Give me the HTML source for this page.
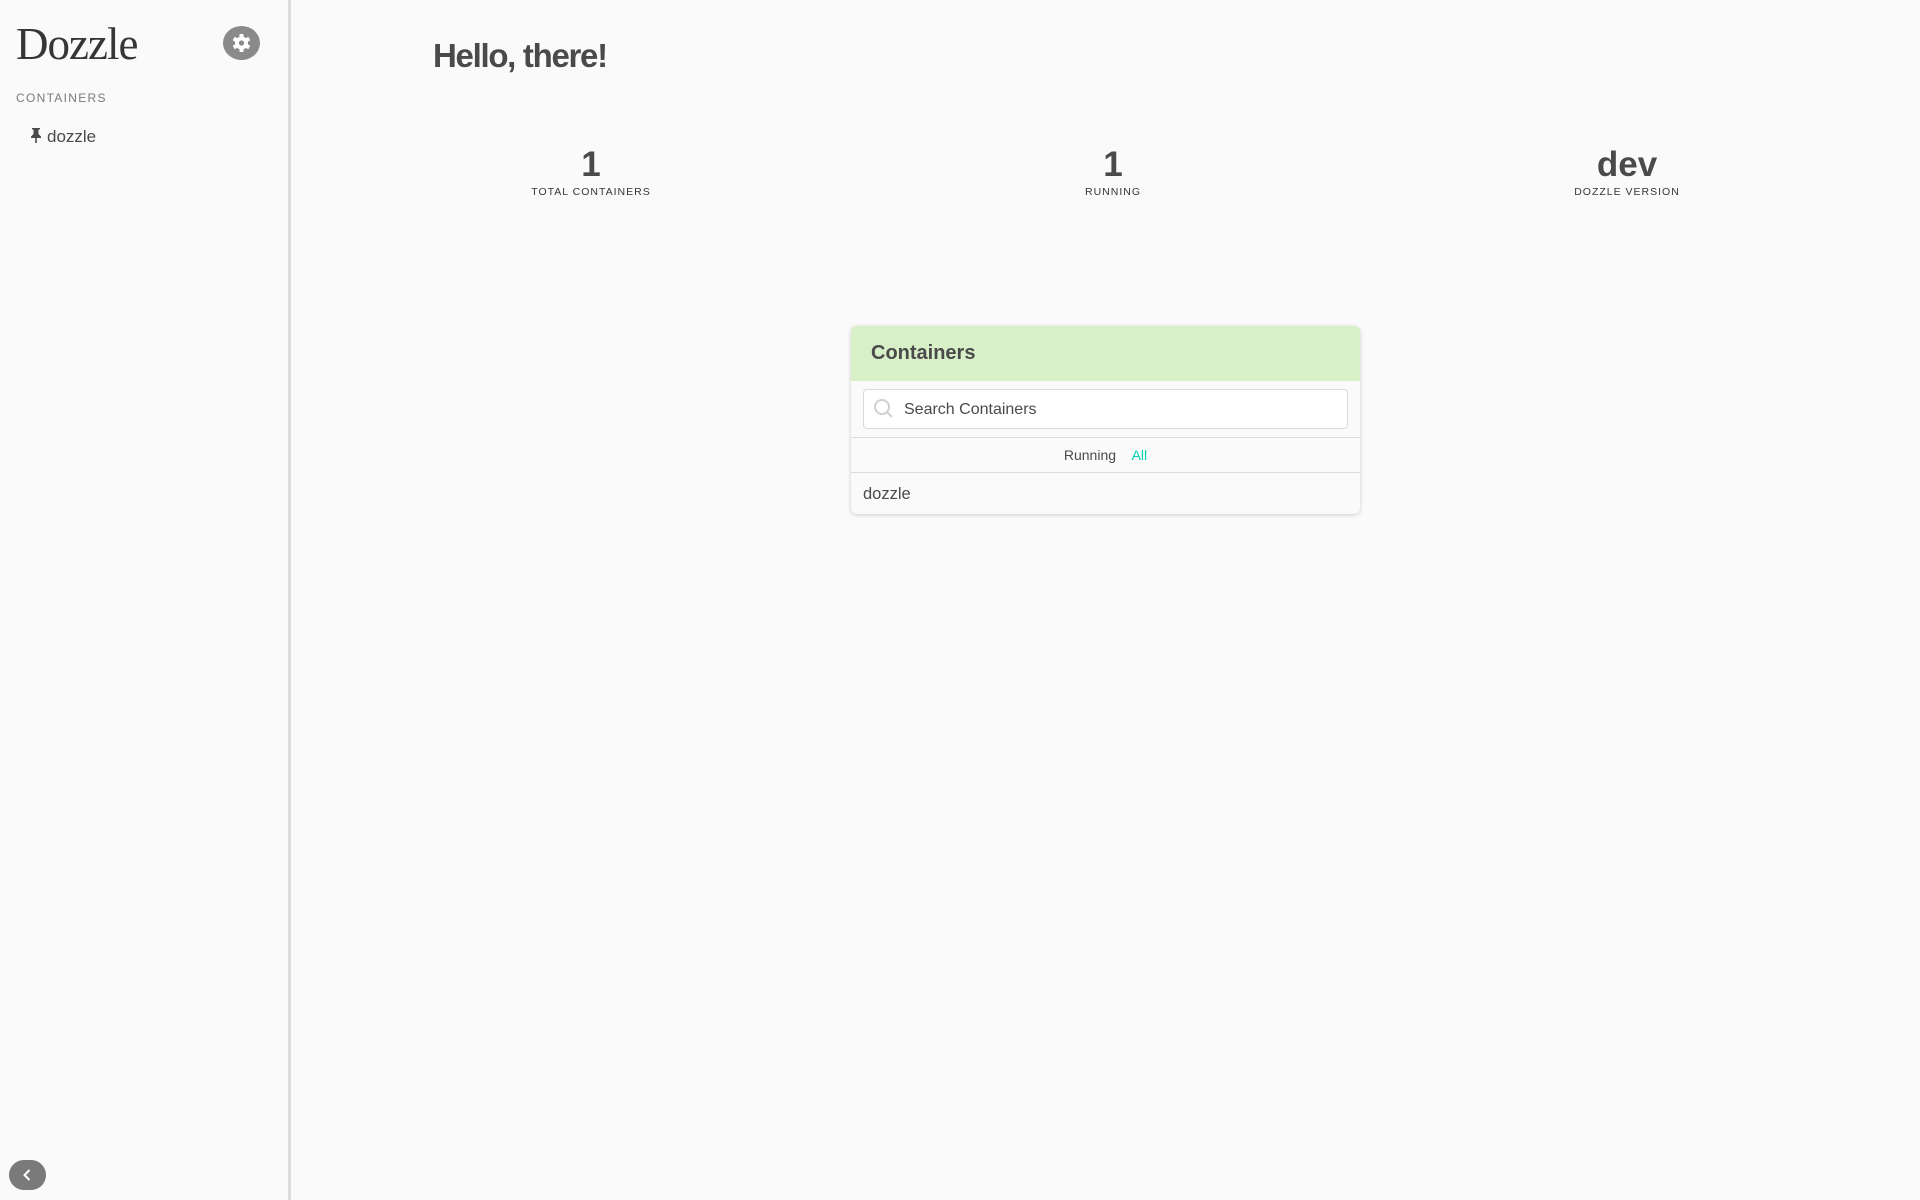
<!DOCTYPE html>
<html><head><meta charset="utf-8"><style>
*{box-sizing:border-box;margin:0;padding:0}
body{width:1920px;height:1200px;background:#fafafa;font-family:"Liberation Sans",sans-serif;color:#4a4a4a;position:relative;overflow:hidden}
.side{position:absolute;left:0;top:0;width:291px;height:1200px;border-right:3px solid #dcdcdc;background:#fafafa}
.logo{position:absolute;left:16px;top:18px;font-family:"Liberation Serif",serif;font-size:45px;color:#363636;letter-spacing:-1px}
.gear{position:absolute;left:223px;top:26px;width:37px;height:34px;border-radius:50%;background:#8a8a8a}
.lbl{position:absolute;left:16px;top:91px;font-size:12px;letter-spacing:1.3px;color:#7a7a7a}
.item{position:absolute;left:30px;top:127px;font-size:17px;color:#4a4a4a}
.coll{position:absolute;left:9px;top:1160px;width:37px;height:30px;border-radius:15px;background:#7a7a7a}
h1{position:absolute;left:433px;top:37px;font-size:33px;font-weight:bold;color:#4a4a4a;letter-spacing:-1.3px}
.stat{position:absolute;top:145px;width:300px;text-align:center}
.stat b{display:block;font-size:35px;line-height:40px;color:#4a4a4a}
.stat span{display:block;font-size:10.5px;letter-spacing:1px;color:#363636;margin-top:1px}
.card{position:absolute;left:851px;top:326px;width:509px;height:188px;border-radius:6px;background:#fafafa;box-shadow:0 1px 4px rgba(0,0,0,.18);overflow:hidden}
.hd{height:55px;background:#d8f0c8;padding:16px 20px;font-size:20px;font-weight:bold;color:#4a4a4a}
.srch{position:absolute;left:12px;top:63px;width:485px;height:40px;border:1px solid #dbdbdb;border-radius:4px;background:#fff}
.srch span{position:absolute;left:40px;top:11px;font-size:16px;color:#4a4a4a}
.tabs{position:absolute;left:0;top:111px;width:509px;height:36px;border-top:1px solid #dbdbdb;border-bottom:1px solid #dbdbdb;text-align:center;font-size:14px;line-height:34px}
.row{position:absolute;left:12px;top:159px;font-size:16.5px;color:#4a4a4a}
</style></head><body>
<div class="side">
<div class="logo">Dozzle</div>
<div class="gear"><svg width="37" height="34" viewBox="0 0 37 34"><g transform="translate(18.5,17)" fill="#fff"><circle r="6.5"/><g><rect x="-2" y="-9" width="4" height="18"/><rect x="-2" y="-9" width="4" height="18" transform="rotate(60)"/><rect x="-2" y="-9" width="4" height="18" transform="rotate(120)"/></g><circle r="2.6" fill="#8a8a8a"/></g></svg></div>
<div class="lbl">CONTAINERS</div>
<div class="item"><svg width="12" height="16" viewBox="0 0 12 16" style="vertical-align:-1px;margin-right:5px"><path d="M2 1h8v1.5H8.5V7L11 9.5V11H6.8v5H5.2v-5H1V9.5L3.5 7V2.5H2z" fill="#4a4a4a"/></svg>dozzle</div>
<div class="coll"><svg width="37" height="30" viewBox="0 0 37 30"><path d="M20.5 10l-5 5 5 5" stroke="#fff" stroke-width="2" fill="none"/></svg></div>
</div>
<h1>Hello, there!</h1>
<div class="stat" style="left:441px"><b>1</b><span>TOTAL CONTAINERS</span></div>
<div class="stat" style="left:963px"><b>1</b><span>RUNNING</span></div>
<div class="stat" style="left:1477px"><b>dev</b><span>DOZZLE VERSION</span></div>
<div class="card">
<div class="hd">Containers</div>
<div class="srch"><svg width="24" height="24" viewBox="0 0 24 24" style="position:absolute;left:8px;top:7px"><circle cx="10" cy="10" r="7" stroke="#d0d0d0" stroke-width="2" fill="none"/><path d="M15 15l5 5" stroke="#d0d0d0" stroke-width="2"/></svg><span>Search Containers</span></div>
<div class="tabs"><span style="color:#4a4a4a">Running</span>&nbsp;&nbsp;&nbsp;&nbsp;<span style="color:#00d1b2">All</span></div>
<div class="row">dozzle</div>
</div>
</body></html>
